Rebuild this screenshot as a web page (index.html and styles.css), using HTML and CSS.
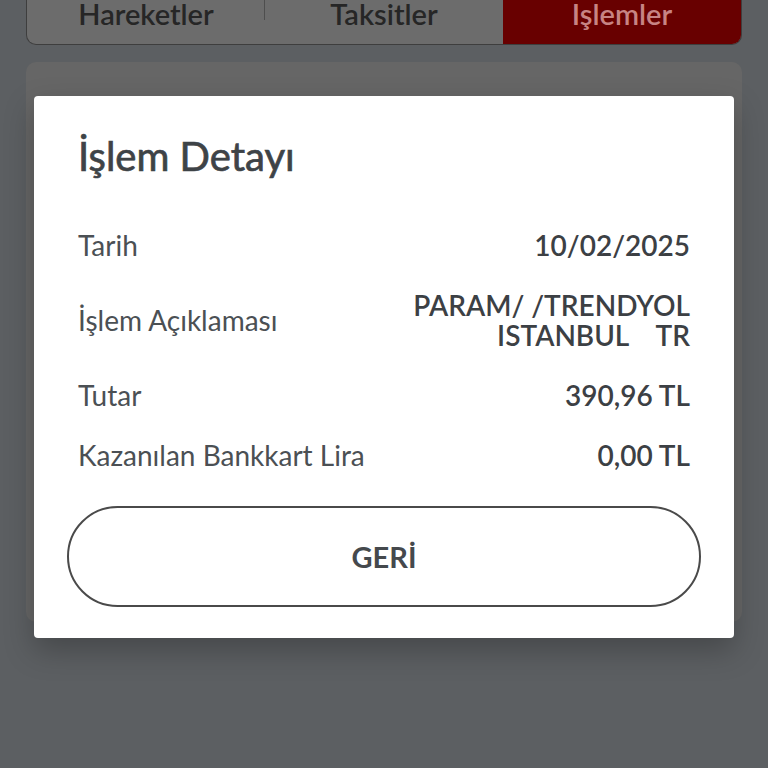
FILE: index.html
```html
<!DOCTYPE html>
<html lang="tr">
<head>
    <meta charset="UTF-8">
    <meta name="viewport" content="width=device-width, initial-scale=1.0">
    <title>İşlem Detayı</title>
    <link rel="stylesheet" href="styles.css">
</head>
<body>
    <div class="tabs">
        <div class="tab">Hareketler</div>
        <div class="tab tab-sep">Taksitler</div>
        <div class="tab active">Işlemler</div>
    </div>
    <div class="card"></div>

    <div class="modal">
        <h2 class="modal-title">İşlem Detayı</h2>
        <div class="rows">
            <div class="row">
                <span class="label">Tarih</span>
                <span class="value">10/02/2025</span>
            </div>
            <div class="row">
                <span class="label">İşlem Açıklaması</span>
                <span class="value">PARAM/ /TRENDYOL<br>ISTANBUL&nbsp;&nbsp;&nbsp;&nbsp;TR</span>
            </div>
            <div class="row">
                <span class="label">Tutar</span>
                <span class="value">390,96 TL</span>
            </div>
            <div class="row">
                <span class="label">Kazanılan Bankkart Lira</span>
                <span class="value">0,00 TL</span>
            </div>
        </div>
        <button class="back">GERİ</button>
    </div>
</body>
</html>
```

FILE: styles.css
```css
body {
    font-family: 'Lato', 'Noto Sans', sans-serif;
    background-color: #5c5f62;
    margin: 0;
    height: 768px;
    overflow: hidden;
    position: relative;
}
.tabs {
    display: flex;
    margin: 0 26px;
    height: 44px;
    background-color: #6c6c6c;
    border: 1px solid #3e3e3e;
    border-top: none;
    border-radius: 0 0 10px 10px;
    overflow: hidden;
}
.tab {
    flex: 1;
    text-align: center;
    font-size: 29px;
    font-weight: 600;
    line-height: 27px;
    color: #262626;
    position: relative;
}
.tab:first-child::after {
    content: "";
    position: absolute;
    right: 0;
    top: 0;
    height: 20px;
    border-right: 1px solid #4e4e4e;
}
.tab.active {
    background-color: #680000;
    color: #c78484;
}
.card {
    margin: 17px 26px 0;
    height: 560px;
    background-color: #666666;
    border-radius: 10px;
}
.modal {
    position: absolute;
    left: 34px;
    top: 96px;
    width: 700px;
    box-sizing: border-box;
    padding: 36px 44px 31px;
    background-color: #ffffff;
    border-radius: 4px;
    box-shadow: 0 12px 30px rgba(0, 0, 0, 0.25);
}
.modal-title {
    margin: 0 0 50px;
    font-size: 40px;
    line-height: 48px;
    font-weight: 400;
    -webkit-text-stroke: 0.7px #3e4347;
    color: #3e4347;
}
.rows {
    display: flex;
    flex-direction: column;
    gap: 30px;
}
.row {
    display: flex;
    justify-content: space-between;
    align-items: center;
    font-size: 28px;
    line-height: 30px;
}
.label {
    color: #4b5054;
}
.value {
    color: #3c4044;
    font-weight: 600;
    text-align: right;
}
.back {
    display: block;
    width: calc(100% + 22px);
    margin: 36px -11px 0;
    height: 101px;
    background-color: #ffffff;
    border: 2px solid #4a4a4a;
    border-radius: 51px;
    font-family: inherit;
    font-size: 29px;
    font-weight: 700;
    color: #45494d;
    cursor: pointer;
}
```
